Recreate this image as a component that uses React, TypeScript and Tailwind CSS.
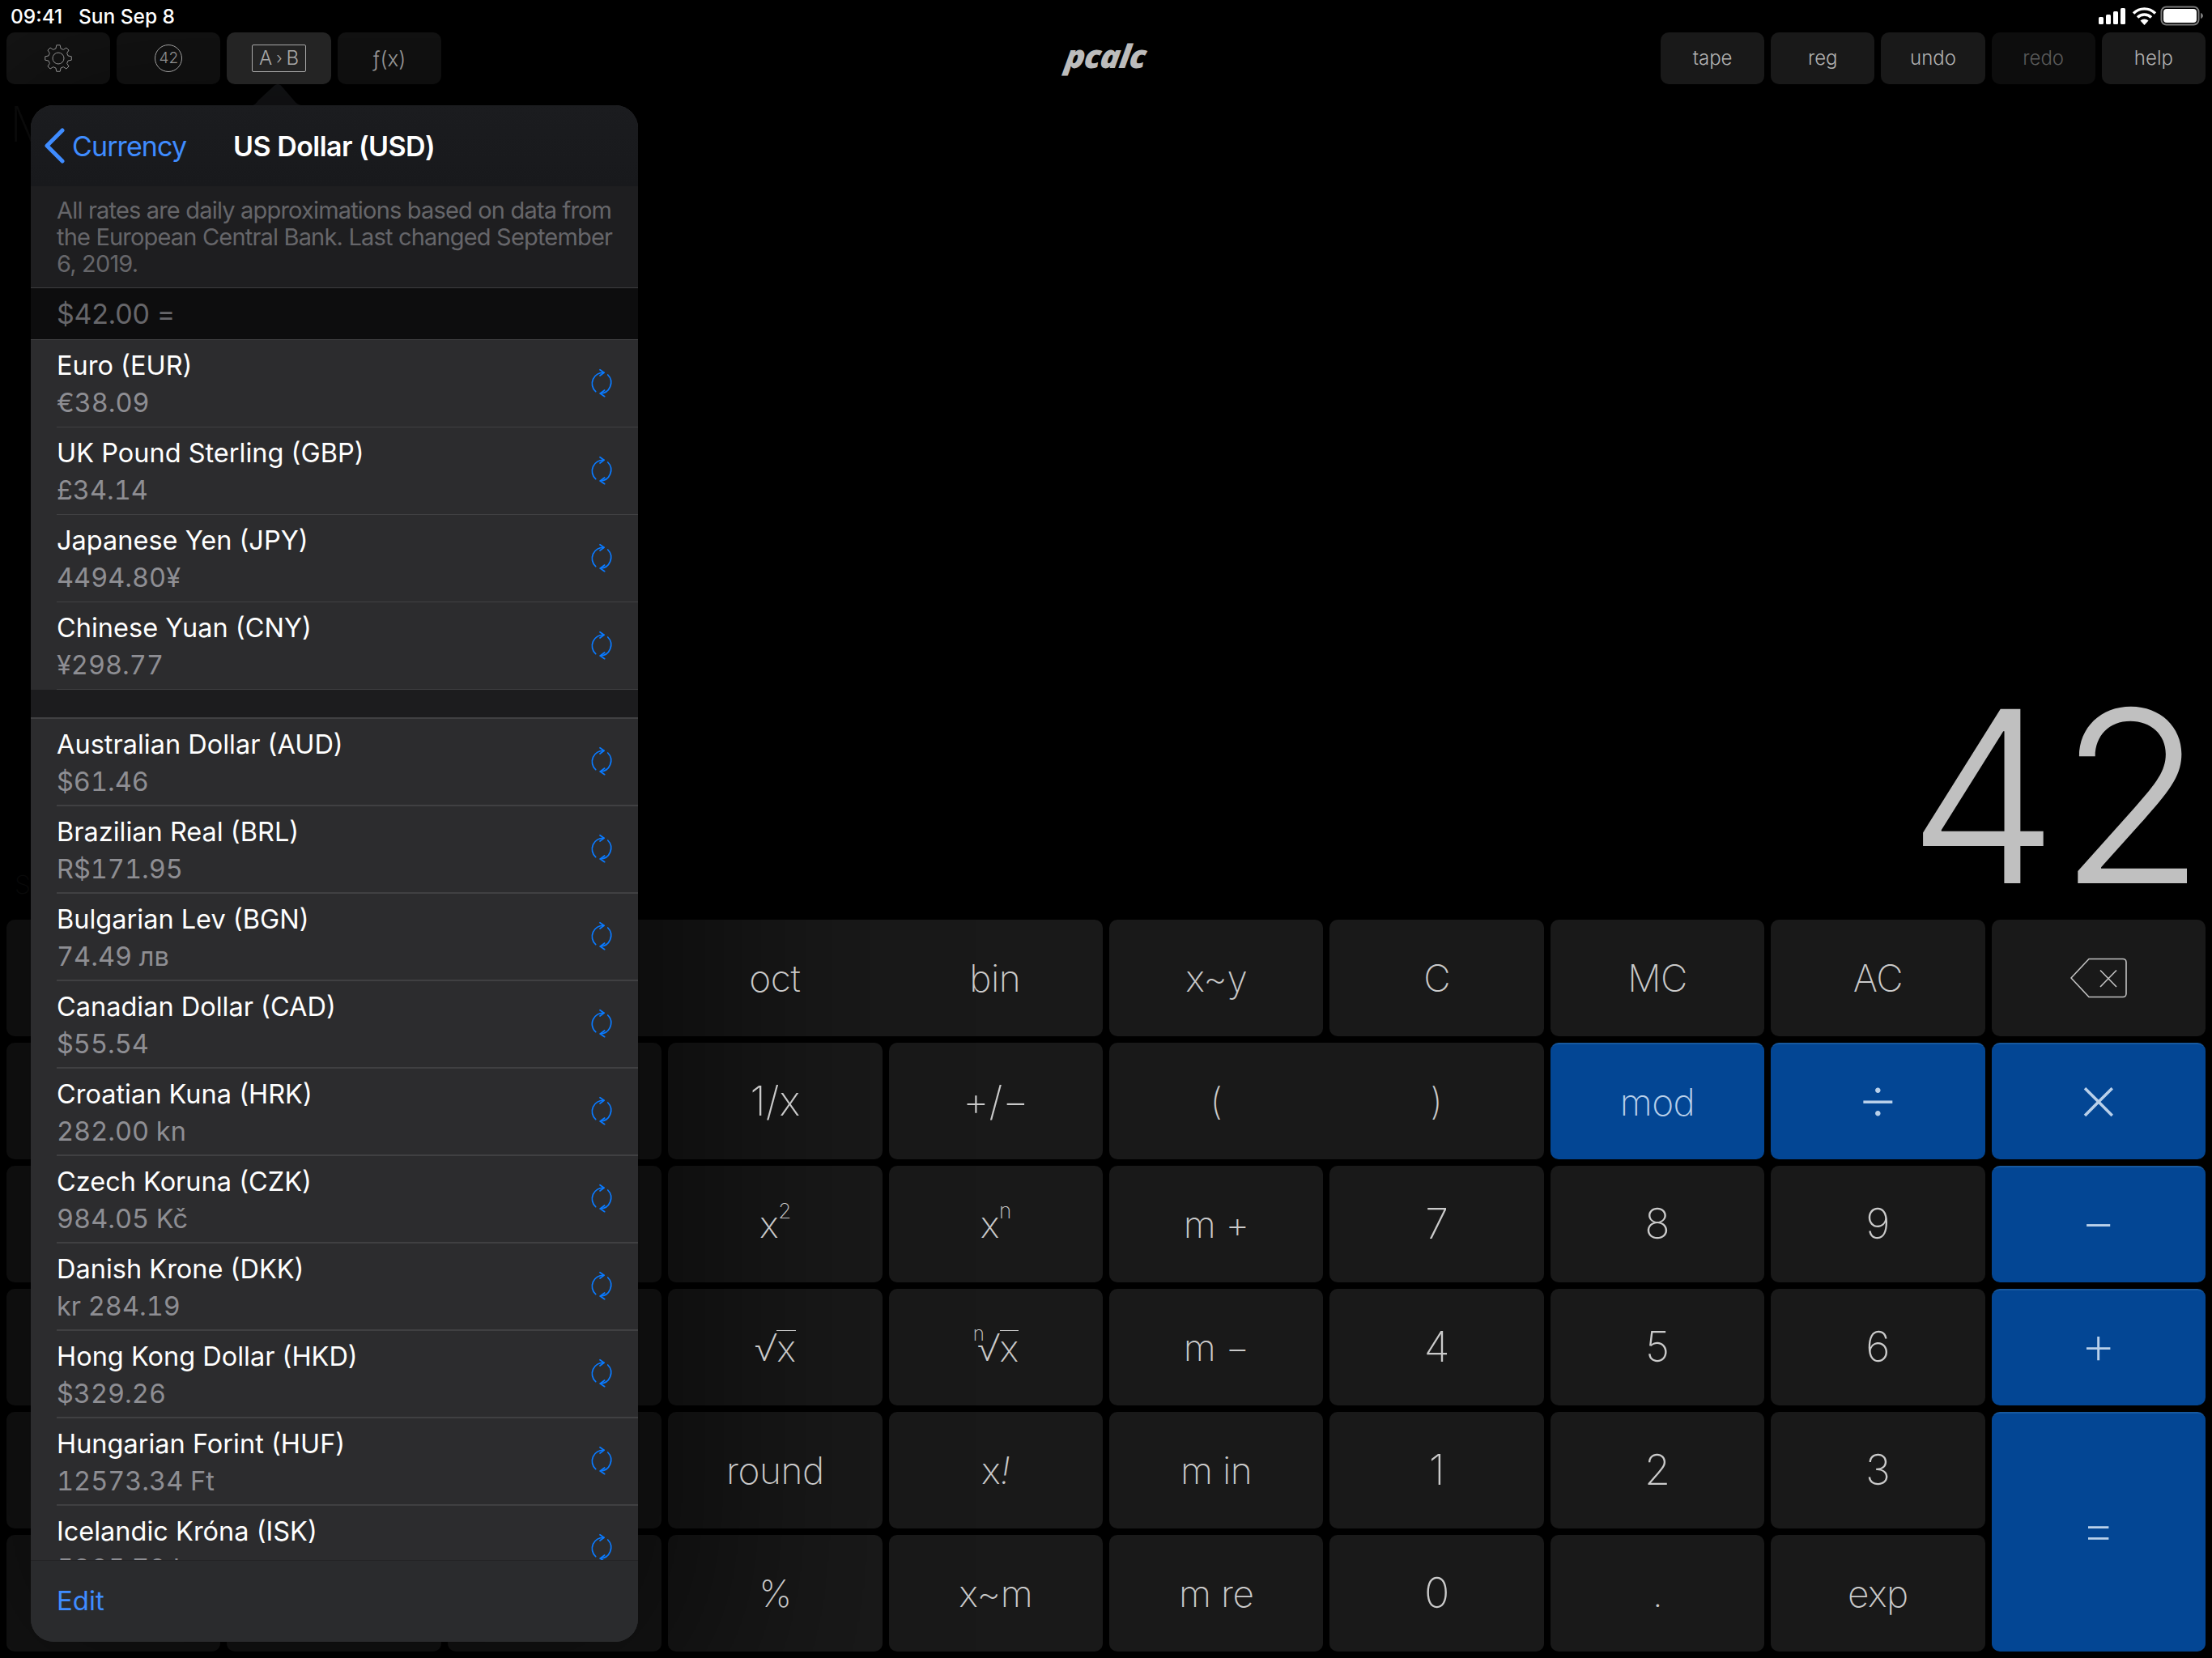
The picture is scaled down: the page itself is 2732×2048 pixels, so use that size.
import React from "react";

const gearPath = (() => {
  const pts: string[] = [];
  const teeth = 8;
  for (let i = 0; i < teeth; i++) {
    const a = (i / teeth) * Math.PI * 2 - Math.PI / 2;
    const s = (Math.PI * 2) / teeth;
    const p = (r: number, t: number) => `${(17 + r * Math.cos(t)).toFixed(2)} ${(17 + r * Math.sin(t)).toFixed(2)}`;
    pts.push(`${i === 0 ? "M" : "L"}${p(12.4, a - s * 0.32)}`);
    pts.push(`L${p(16.4, a - s * 0.17)}`);
    pts.push(`L${p(16.4, a + s * 0.17)}`);
    pts.push(`L${p(12.4, a + s * 0.32)}`);
  }
  return pts.join(" ") + " Z";
})();

function Gear() {
  return (
    <svg width="34" height="34" viewBox="0 0 34 34" fill="none" stroke="#8f8f8f" strokeWidth="1" strokeLinejoin="round">
      <path d={gearPath} />
      <circle cx="17" cy="17" r="7" />
    </svg>
  );
}

function Refresh() {
  return (
    <svg className="-mt-[3px]" width="36" height="36" viewBox="-18 -18 36 36" fill="none" stroke="#0a7aff" strokeWidth="1.7" strokeLinecap="round" strokeLinejoin="round">
      <path d="M-7.3 10.7A13.5 13.5 0 0 1 3 -12.7" />
      <path d="M7.7 -10A13.5 13.5 0 0 1 -1.7 13" />
      <path d="M-2 -16.3L3 -12.7L-2 -9" />
      <path d="M3.7 9L-1.7 13L3.7 16.7" />
    </svg>
  );
}

function StatusIcons() {
  return (
    <svg width="134" height="26" viewBox="0 0 134 26" fill="none">
      <rect x="2" y="14" width="6" height="9" rx="1.5" fill="#fff" />
      <rect x="11" y="11" width="6" height="12" rx="1.5" fill="#fff" />
      <rect x="20" y="7" width="6" height="16" rx="1.5" fill="#fff" />
      <rect x="29" y="3" width="6" height="20" rx="1.5" fill="#fff" />
      <path d="M45 9.5a19 19 0 0 1 27 0" stroke="#fff" strokeWidth="3.4" />
      <path d="M50 14.5a12 12 0 0 1 17 0" stroke="#fff" strokeWidth="3.4" />
      <path d="M58.5 24L53.5 18.6a7.2 7.2 0 0 1 10 0Z" fill="#fff" />
      <rect x="79.5" y="1.5" width="46" height="22" rx="6" stroke="#7a7a7a" strokeWidth="2" />
      <rect x="82" y="4" width="41" height="17" rx="4" fill="#fff" />
      <path d="M128 9v7c1.8-.6 3-2 3-3.500s-1.200-2.900-3-3.500Z" fill="#7a7a7a" />
    </svg>
  );
}

function Backspace() {
  return (
    <svg width="72" height="50" viewBox="0 0 72 50" fill="none" stroke="#c2c2c2" strokeWidth="1.6" strokeLinejoin="round">
      <path d="M24 1.500H66a4 4 0 0 1 4 4V44.500a4 4 0 0 1-4 4H24L2 25Z" />
      <path d="M38 15.500L58 36M58 15.500L38 36" />
    </svg>
  );
}

function ToolButton({ children, dim, active }: { children: React.ReactNode; dim?: boolean; active?: boolean }) {
  return (
    <div
      className={
        "flex h-16 items-center justify-center rounded-[10px] text-[24px] font-light " +
        (active ? "relative z-20 bg-[#242424] text-[#b0b0b0] " : dim ? "bg-[#0d0d0d] text-[#5a5a5a] " : "bg-[#191919] text-[#b0b0b0] ")
      }
    >
      <div className="relative z-20 flex items-center justify-center">{children}</div>
    </div>
  );
}

function Toolbar() {
  return (
    <div className="grid h-16 grid-cols-[repeat(20,minmax(0,1fr))] gap-2 px-2">
      <ToolButton>
        <Gear />
      </ToolButton>
      <ToolButton>
        <div className="flex h-[34px] w-[34px] items-center justify-center rounded-full border border-[#a0a0a0] text-[19px] text-[#8f8f8f]">42</div>
      </ToolButton>
      <ToolButton active>
        <div className="flex h-[34px] w-[67px] items-center justify-center gap-[5px] rounded-[2px] border-[1.5px] border-[#a8a8a8] text-[24px] leading-none text-[#a8a8a8]">
          <span>A</span>
          <span className="text-[20px]">›</span>
          <span>B</span>
        </div>
      </ToolButton>
      <ToolButton>
        <span className="text-[26px] text-[#959595]">ƒ(x)</span>
      </ToolButton>
      <div className="col-span-11 flex items-center justify-center pb-[6px] pl-[136px]">
        <span className="-skew-x-[8deg] scale-x-[1.02] text-[40px] leading-none font-extrabold tracking-[-1px] text-[#bcbcbc] italic font-['Open_Sans',sans-serif]">pcalc</span>
      </div>
      <ToolButton>tape</ToolButton>
      <ToolButton>reg</ToolButton>
      <ToolButton>undo</ToolButton>
      <ToolButton dim>redo</ToolButton>
      <ToolButton>help</ToolButton>
    </div>
  );
}

function Key({
  children,
  span,
  rows,
  blue,
  digit,
  large,
  op,
}: {
  children?: React.ReactNode;
  span?: "two" | "three";
  rows?: boolean;
  blue?: boolean;
  digit?: boolean;
  large?: boolean;
  op?: "wide" | "times";
}) {
  return (
    <div
      className={
        "flex items-center justify-center rounded-[10px] font-extralight " +
        (op === "times" ? "pb-[12px] text-[84px] leading-none " : op === "wide" ? "pb-[11px] text-[68px] leading-none " : digit ? "text-[52px] " : large ? "text-[50px] " : "text-[46px] tracking-[-0.5px] ") +
        (span === "two" ? "col-span-2 " : span === "three" ? "col-span-3 " : "") +
        (rows ? "row-span-2 " : "") +
        (blue ? "border-t-2 border-[#17599f] bg-[#034694] text-[#b9d0ea] " : "bg-[#191919] text-[#cacaca] ")
      }
    >
      <div className="relative z-20 flex w-full items-center justify-center">{children}</div>
    </div>
  );
}

function Keypad() {
  return (
    <div className="grid h-[904px] grid-cols-10 grid-rows-6 gap-2 px-2">
      <Key />
      <Key />
      <Key span="three">
        <div className="flex w-full">
          <span className="ml-[272px] w-[264px] text-center">oct</span>
          <span className="ml-2 w-[264px] text-center">bin</span>
        </div>
      </Key>
      <Key>x~y</Key>
      <Key>C</Key>
      <Key>MC</Key>
      <Key>AC</Key>
      <Key>
        <Backspace />
      </Key>

      <Key />
      <Key />
      <Key />
      <Key large>1/x</Key>
      <Key large>+/−</Key>
      <Key span="two">
        <div className="flex w-full">
          <span className="w-[264px] text-center">(</span>
          <span className="ml-2 w-[264px] text-center">)</span>
        </div>
      </Key>
      <Key blue>mod</Key>
      <Key blue op="times">÷</Key>
      <Key blue op="times">×</Key>

      <Key />
      <Key />
      <Key />
      <Key>
        x<sup className="-top-[16px] text-[26px]">2</sup>
      </Key>
      <Key>
        x<sup className="-top-[16px] text-[26px]">n</sup>
      </Key>
      <Key>m +</Key>
      <Key digit>7</Key>
      <Key digit>8</Key>
      <Key digit>9</Key>
      <Key blue op="wide">−</Key>

      <Key />
      <Key />
      <Key />
      <Key>
        √<span className="border-t-[1.5px] border-[#c6c6c6] leading-[42px]">x</span>
      </Key>
      <Key>
        <sup className="-top-[16px] -mr-[8px] text-[24px]">n</sup>√<span className="border-t-[1.5px] border-[#c6c6c6] leading-[42px]">x</span>
      </Key>
      <Key>m −</Key>
      <Key digit>4</Key>
      <Key digit>5</Key>
      <Key digit>6</Key>
      <Key blue op="wide">+</Key>

      <Key />
      <Key />
      <Key />
      <Key>round</Key>
      <Key>
        x<span className="italic">!</span>
      </Key>
      <Key>m in</Key>
      <Key digit>1</Key>
      <Key digit>2</Key>
      <Key digit>3</Key>
      <Key blue rows op="wide">
        =
      </Key>

      <Key />
      <Key />
      <Key />
      <Key>%</Key>
      <Key>x~m</Key>
      <Key>m re</Key>
      <Key digit>0</Key>
      <Key>.</Key>
      <Key>exp</Key>
    </div>
  );
}

const groupA = [
  ["Euro (EUR)", "€38.09"],
  ["UK Pound Sterling (GBP)", "£34.14"],
  ["Japanese Yen (JPY)", "4494.80¥"],
  ["Chinese Yuan (CNY)", "¥298.77"],
];
const groupB = [
  ["Australian Dollar (AUD)", "$61.46"],
  ["Brazilian Real (BRL)", "R$171.95"],
  ["Bulgarian Lev (BGN)", "74.49 лв"],
  ["Canadian Dollar (CAD)", "$55.54"],
  ["Croatian Kuna (HRK)", "282.00 kn"],
  ["Czech Koruna (CZK)", "984.05 Kč"],
  ["Danish Krone (DKK)", "kr 284.19"],
  ["Hong Kong Dollar (HKD)", "$329.26"],
  ["Hungarian Forint (HUF)", "12573.34 Ft"],
  ["Icelandic Króna (ISK)", "5385.70 kr"],
];

function Row({ name, value }: { name: string; value: string }) {
  return (
    <div className="relative flex h-[108px] shrink-0 items-center justify-between pr-[27px] pl-[32px]">
      <div className="flex flex-col pt-[2px] text-[32.500px] leading-[46px]">
        <span className="text-white">{name}</span>
        <span className="text-[#8e8e93] tabular-nums">{value}</span>
      </div>
      <Refresh />
      <div className="absolute right-0 bottom-0 left-[32px] h-[1.500px] bg-[#404042]" />
    </div>
  );
}

function Popover() {
  return (
    <>
      <svg className="absolute top-[103px] left-[306px] z-10" width="74" height="28" viewBox="0 0 74 28">
        <path d="M0 28C8 28 10 25 13 21L33 2.500C35.500 .500 38.500 .500 41 2.500L57 21C60 25 64 28 74 28Z" fill="#1b1c1f" />
      </svg>
      <div className="absolute top-[130px] left-[38px] z-10 flex h-[1898px] w-[750px] flex-col overflow-hidden rounded-[28px] bg-[#2c2c2e] shadow-[0_0_420px_110px_rgba(0,0,0,0.55)]">
        <div className="relative flex h-[100px] shrink-0 items-center bg-gradient-to-b from-[#1b1c1f] to-[#18191c] pl-[16px] text-[34px]">
          <svg width="28" height="44" viewBox="0 0 28 44" fill="none" stroke="#3f8cff" strokeWidth="5" strokeLinecap="round" strokeLinejoin="round">
            <path d="M23 3L4 22L23 41" />
          </svg>
          <span className="ml-[7px] text-[34px] tracking-[-0.9px] text-[#3f8cff]">Currency</span>
          <span className="ml-[58px] text-[34px] font-semibold tracking-[-0.55px] text-white">US Dollar (USD)</span>
        </div>
        <div className="h-[126px] shrink-0 border-b-[1.500px] border-[#3d3d3f] bg-[#1e1e20] pt-[13px] pl-[32px] text-[29px] leading-[33px] tracking-[-0.82px] whitespace-nowrap text-[#66666a]">
          All rates are daily approximations based on data from
          <br />
          the European Central Bank. Last changed September
          <br />
          6, 2019.
        </div>
        <div className="flex h-[64px] shrink-0 items-center border-b-[1.500px] border-[#404042] bg-[#0d0d0e] px-[32px] text-[34px] tracking-[-0.3px] text-[#66666a]">$42.00 =</div>
        <div className="relative flex-1 overflow-hidden">
          {groupA.map(([n, v]) => (
            <Row key={n} name={n} value={v} />
          ))}
          <div className="h-[34px] bg-[#1c1c1e]" />
          <div className="h-[1.500px] bg-[#404042]" />
          {groupB.map(([n, v]) => (
            <Row key={n} name={n} value={v} />
          ))}
        </div>
        <div className="flex h-[101px] shrink-0 items-center border-t border-[#242426] bg-[#2a2b2d] pl-[32px] text-[33px] text-[#3f8cff]">Edit</div>
      </div>
    </>
  );
}

export default function App() {
  return (
    <div className="relative flex h-[2048px] w-[2732px] flex-col overflow-hidden bg-black font-[Inter,'Noto_Sans',sans-serif]">
      <div className="relative z-20 flex h-10 items-center justify-between pr-[8px] pl-[13px] text-[24.5px] font-medium text-white">
        <span>09:41&nbsp;&nbsp;&nbsp;Sun Sep 8</span>
        <StatusIcons />
      </div>
      <Toolbar />
      <div className="flex flex-1 items-end justify-end pr-[8px] pb-[5px]">
        <span className="text-[296px] leading-none font-light text-[#c0c0c0]">42</span>
      </div>
      <Keypad />
      <div className="h-2 shrink-0" />
      <span className="absolute top-[118px] left-[12px] text-[60px] leading-[70px] font-extralight text-[#101010]">M</span>
      <span className="absolute top-[1070px] left-[18px] text-[32px] leading-[46px] font-extralight text-[#101010]">S</span>
      <Popover />
    </div>
  );
}
